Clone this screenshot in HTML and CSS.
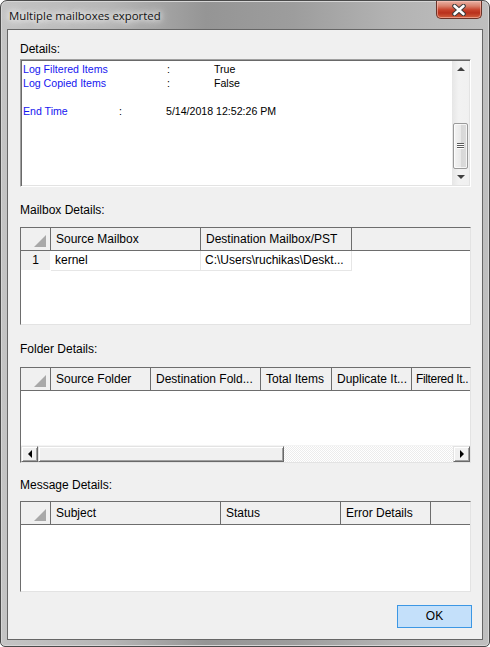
FILE: index.html
```html
<!DOCTYPE html>
<html>
<head>
<meta charset="utf-8">
<title>Multiple mailboxes exported</title>
<link rel="stylesheet" href="styles.css">
</head>
<body>
<div class="window">
  <div class="titlebar">
    <span class="title">Multiple mailboxes exported</span>
    <div class="close">
      <svg width="16" height="12" viewBox="0 0 16 12">
        <path d="M3.5 2 L12.5 10 M12.5 2 L3.5 10" stroke="#3b3b3b" stroke-width="4.6" stroke-linecap="round" fill="none"/>
        <path d="M3.5 2 L12.5 10 M12.5 2 L3.5 10" stroke="#ffffff" stroke-width="2.6" stroke-linecap="round" fill="none"/>
      </svg>
    </div>
  </div>
  <div class="client">
    <div class="label lbl-details">Details:</div>
    <div class="textbox">
      <div class="text-lines">
        <div class="tline"><span class="k k1">Log Filtered Items</span><span class="colon">:</span><span class="v">True</span></div>
        <div class="tline"><span class="k k1">Log Copied Items</span><span class="colon">:</span><span class="v">False</span></div>
        <div class="tline"></div>
        <div class="tline"><span class="k k2">End Time</span><span class="colon">:</span><span class="v">5/14/2018 12:52:26 PM</span></div>
      </div>
      <div class="vscroll">
        <div class="sbtn"><span class="tri-up"></span></div>
        <div class="vtrack"><div class="vthumb"><span class="grip"></span><span class="grip"></span><span class="grip"></span></div></div>
        <div class="sbtn"><span class="tri-down"></span></div>
      </div>
    </div>

    <div class="label lbl-mailbox">Mailbox Details:</div>
    <div class="grid grid-mailbox">
      <div class="ghead">
        <div class="hc rh"><span class="corner"></span></div>
        <div class="hc w150">Source Mailbox</div>
        <div class="hc w151">Destination Mailbox/PST</div>
        <div class="hc-fill"></div>
      </div>
      <div class="gbody">
        <div class="grow">
          <div class="rc rh">1</div>
          <div class="rc w150">kernel</div>
          <div class="rc w151">C:\Users\ruchikas\Deskt...</div>
        </div>
      </div>
    </div>

    <div class="label lbl-folder">Folder Details:</div>
    <div class="grid grid-folder">
      <div class="ghead">
        <div class="hc rh"><span class="corner"></span></div>
        <div class="hc w100">Source Folder</div>
        <div class="hc w111">Destination Fold...</div>
        <div class="hc w70">Total Items</div>
        <div class="hc w80">Duplicate It...</div>
        <div class="hc-fill tight">Filtered It..</div>
      </div>
      <div class="gbody"></div>
      <div class="hscroll">
        <div class="hbtn"><span class="tri-left"></span></div>
        <div class="hthumb"></div>
        <div class="htrack"></div>
        <div class="hbtn"><span class="tri-right"></span></div>
      </div>
    </div>

    <div class="label lbl-message">Message Details:</div>
    <div class="grid grid-message">
      <div class="ghead">
        <div class="hc rh"><span class="corner"></span></div>
        <div class="hc w170">Subject</div>
        <div class="hc w120">Status</div>
        <div class="hc w90">Error Details</div>
        <div class="hc-fill"></div>
      </div>
      <div class="gbody"></div>
    </div>

    <div class="ok">OK</div>
  </div>
</div>
</body>
</html>
```

FILE: styles.css
```css
* { box-sizing: border-box; }
html, body { margin: 0; padding: 0; }
body {
  width: 490px;
  height: 647px;
  overflow: hidden;
  background: #ffffff;
  font-family: "Liberation Sans", Arial, sans-serif;
  font-size: 12px;
  color: #000;
}

.window {
  width: 490px;
  height: 647px;
  display: flex;
  flex-direction: column;
  border: 1px solid #4a4a4a;
  border-radius: 7px 7px 5px 5px;
  background:
    linear-gradient(90deg, #c4c4c4 0%, #b6b6b6 22%, #959595 42%, #9d9d9d 60%, #b3b3b3 80%, #bfbfbf 100%);
  box-shadow: inset 0 0 0 1px #d6d6d6;
}

.titlebar {
  height: 28px;
  display: flex;
  align-items: center;
  justify-content: space-between;
  padding-left: 8px;
}
.title {
  font-family: "Open Sans", "Noto Sans", sans-serif;
  font-size: 11.4px;
  color: #111;
  margin-top: 1px;
  text-shadow: 0 0 8px #ffffff, 0 0 5px #f4f4f4, 0 0 12px #ffffff;
}
.close {
  align-self: flex-start;
  width: 46px;
  height: 18px;
  margin-right: 7px;
  border: 1px solid #6b3328;
  border-top: none;
  border-radius: 0 0 5px 5px;
  background: linear-gradient(180deg, #e9b2a5 0%, #d9806b 30%, #c7432c 52%, #b9301c 70%, #d0613e 100%);
  box-shadow: inset 0 0 0 1px rgba(255, 200, 190, 0.55);
  display: flex;
  align-items: center;
  justify-content: center;
}

.client {
  flex: 1;
  margin: 0 6px 6px 6px;
  border: 1px solid #666666;
  background: #f0f0f0;
  padding: 0 11px 0 12px;
  display: flex;
  flex-direction: column;
}

.label {
  height: 14px;
  line-height: 14px;
  font-size: 12px;
  color: #000;
  white-space: nowrap;
}
.lbl-details { margin-top: 12px; }
.lbl-mailbox { margin-top: 16px; }
.lbl-folder { margin-top: 17px; }
.lbl-message { margin-top: 15px; }

/* Details text box */
.textbox {
  margin-top: 3px;
  height: 128px;
  background: #fff;
  border: 1px solid;
  border-color: #a0a0a0 #ffffff #ffffff #a0a0a0;
  box-shadow: inset 1px 1px 0 #696969, inset -1px -1px 0 #e3e3e3;
  padding: 1px 1px 1px 1px;
  display: flex;
}
.text-lines {
  flex: 1;
  padding: 1px 0 0 1px;
  font-size: 10.6px;
}
.tline {
  height: 14px;
  line-height: 14px;
  white-space: nowrap;
  display: flex;
}
.k { color: #1616f0; display: inline-block; }
.k1 { width: 144px; }
.k2 { width: 96px; }
.colon { display: inline-block; width: 47px; }
.v { color: #000; }

.vscroll {
  width: 17px;
  display: flex;
  flex-direction: column;
  background: linear-gradient(90deg, #e6e6e6, #f2f2f2 40%, #f0f0f0);
}
.sbtn {
  height: 17px;
  display: flex;
  align-items: center;
  justify-content: center;
}
.tri-up {
  width: 0; height: 0;
  border-left: 4px solid transparent;
  border-right: 4px solid transparent;
  border-bottom: 4px solid #404040;
}
.tri-down {
  width: 0; height: 0;
  border-left: 4px solid transparent;
  border-right: 4px solid transparent;
  border-top: 4px solid #404040;
}
.vtrack {
  flex: 1;
  padding: 45px 1px 0 1px;
}
.vthumb {
  height: 46px;
  border: 1px solid #9a9a9a;
  border-radius: 2px;
  background: linear-gradient(90deg, #f4f4f4 0%, #e9e9e9 50%, #d7d7d7 51%, #dcdcdc 100%);
  box-shadow: inset 0 0 0 1px rgba(255,255,255,0.7);
  display: flex;
  flex-direction: column;
  align-items: center;
  justify-content: center;
  gap: 1px;
}
.grip {
  width: 7px;
  height: 1px;
  background: #5a5a5a;
  box-shadow: 0 1px 0 #ffffff;
}

/* Grids */
.grid {
  margin-top: 10px;
  background: #fff;
  border: 1px solid;
  border-color: #6d6d6d #e3e3e3 #e3e3e3 #6d6d6d;
  display: flex;
  flex-direction: column;
  overflow: hidden;
}
.grid-mailbox { height: 98px; margin-top: 10px; }
.grid-folder { height: 96px; margin-top: 11px; }
.grid-message { height: 91px; margin-top: 9px; }

.ghead {
  height: 23px;
  display: flex;
  background: #f0f0f0;
  border-bottom: 1px solid #6d6d6d;
  flex-shrink: 0;
}
.hc {
  flex-shrink: 0;
  height: 22px;
  line-height: 22px;
  padding-left: 5px;
  border-right: 1px solid #6d6d6d;
  white-space: nowrap;
  overflow: hidden;
}
.hc-fill {
  flex: 1;
  height: 22px;
  line-height: 22px;
  padding-left: 5px;
  white-space: nowrap;
  overflow: hidden;
}
.hc-fill.tight {
  padding-left: 4px;
  letter-spacing: -0.35px;
}
.rh {
  width: 30px;
  position: relative;
  padding-left: 0;
}
.corner {
  position: absolute;
  right: 4px;
  bottom: 3px;
  width: 0;
  height: 0;
  border-left: 12px solid transparent;
  border-bottom: 12px solid #a8a8a8;
}
.w70 { width: 71px; }
.w80 { width: 80px; }
.w90 { width: 90px; }
.w100 { width: 100px; }
.w111 { width: 110px; }
.w120 { width: 120px; }
.w150 { width: 150px; }
.w151 { width: 151px; }
.w170 { width: 170px; }

.gbody { flex: 1; background: #fff; }
.grow { display: flex; height: 20px; }
.rc {
  flex-shrink: 0;
  height: 20px;
  line-height: 19px;
  padding-left: 4px;
  border-right: 1px solid #e6e6e6;
  border-bottom: 1px solid #e6e6e6;
  white-space: nowrap;
  overflow: hidden;
}
.rc.rh {
  background: #f0f0f0;
  text-align: center;
  padding-left: 0;
  border-right-color: #ffffff;
  border-bottom-color: #ffffff;
}

/* horizontal scrollbar */
.hscroll {
  height: 17px;
  display: flex;
  flex-shrink: 0;
  border-top: 1px solid #f4f4f4;
}
.hbtn {
  width: 17px;
  height: 16px;
  background: #f0f0f0;
  border: 1px solid;
  border-color: #e3e3e3 #696969 #696969 #e3e3e3;
  box-shadow: inset 1px 1px 0 #ffffff, inset -1px -1px 0 #a0a0a0;
  display: flex;
  align-items: center;
  justify-content: center;
}
.tri-left {
  width: 0; height: 0;
  border-top: 4px solid transparent;
  border-bottom: 4px solid transparent;
  border-right: 4px solid #000;
}
.tri-right {
  width: 0; height: 0;
  border-top: 4px solid transparent;
  border-bottom: 4px solid transparent;
  border-left: 4px solid #000;
}
.hthumb {
  width: 246px;
  height: 16px;
  background: #f0f0f0;
  border: 1px solid;
  border-color: #e3e3e3 #696969 #696969 #e3e3e3;
  box-shadow: inset 1px 1px 0 #ffffff, inset -1px -1px 0 #a0a0a0;
}
.htrack {
  flex: 1;
  height: 16px;
  background: repeating-conic-gradient(#ffffff 0 25%, #ececec 0 50%) 0 0 / 2px 2px;
}

.ok {
  align-self: flex-end;
  margin-top: 13px;
  margin-right: -1px;
  width: 75px;
  height: 23px;
  line-height: 21px;
  text-align: center;
  font-size: 12px;
  color: #000;
  background: #c4e0fa;
  border: 1px solid #3c97e4;
}
```
